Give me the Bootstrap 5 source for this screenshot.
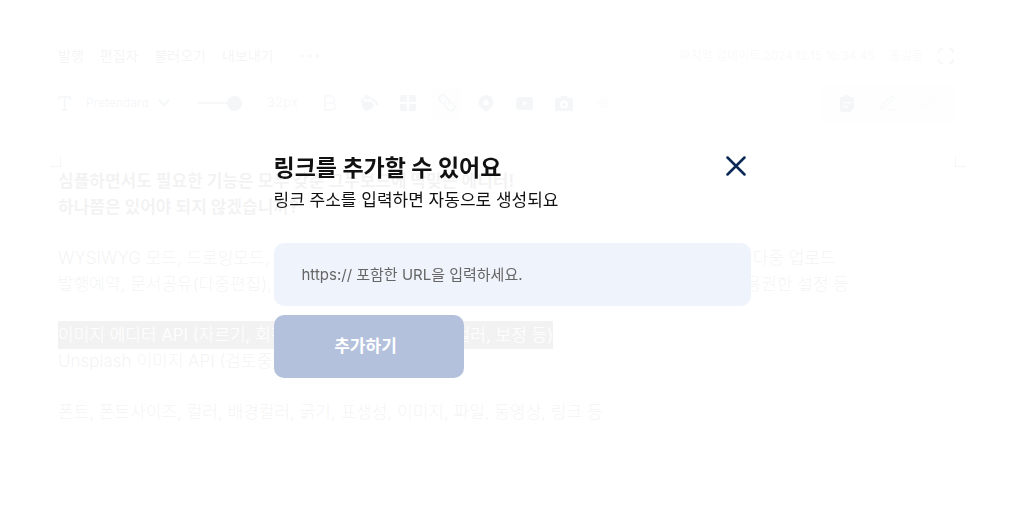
<!DOCTYPE html>
<html lang="ko">
<head>
<meta charset="utf-8">
<meta name="viewport" content="width=device-width, initial-scale=1">
<title>링크 추가</title>
<link href="https://cdn.jsdelivr.net/npm/bootstrap@5.3.0/dist/css/bootstrap.min.css" rel="stylesheet">
<style>
  :root { --navy: #0a2a55; --ink: #111; --soft: #5f6f8c; --tool: #35507a; }
  body { font-family: Inter, "Noto Sans CJK KR", sans-serif; color: var(--ink); background: #fff; }
  svg { display: block; }
  .editor { padding: 46px 70px 40px 58px; }
  .topbar { height: 20px; font-size: 14px; line-height: 20px; }
  .topbar nav { gap: 16px; }
  .topbar a { color: #333; text-decoration: none; }
  .more-btn, .tool-btn, .close-btn { border: 0; background: none; padding: 0; color: var(--navy); }
  .more-btn { margin-left: 11px; color: var(--soft); }
  .status { gap: 15px; font-size: 12px; color: #888; }
  .toolbar { margin-top: 17px; height: 40px; }
  .text-tools { gap: 15px; width: 139px; }
  .font-pick { width: 84px; border: 0; padding: 0; font-size: 12px; color: var(--tool); appearance: none;
    background: url("data:image/svg+xml,%3Csvg xmlns='http://www.w3.org/2000/svg' width='12' height='8'%3E%3Cpath d='M1 1l5 5 5-5' fill='none' stroke='%2335507a' stroke-width='2'/%3E%3C/svg%3E") no-repeat right center; }
  .size-tools { width: 117px; gap: 22px; font-size: 13px; color: #666; }
  .size-range { appearance: none; width: 48px; height: 16px; margin: 0; background: linear-gradient(90deg, #5f6f8c 75%, #ddd 75%) center / 100% 2px no-repeat; }
  .size-range::-webkit-slider-thumb { appearance: none; width: 15px; height: 15px; border-radius: 50%; background: #35507a; }
  .tool-btn { width: 31px; height: 31px; display: flex; align-items: center; justify-content: center; border-radius: 4px; color: var(--tool); }
  .tool-btn.line-icon { color: var(--soft); }
  .tool-btn.active { background: #e8e8ec; }
  .mode-group { background: #dfe1e6; border-radius: 6px; padding: 0 10px; gap: 10px; height: 40px; }
  .crop-marks { margin: 33px -12px 0 -8px; height: 12px; color: #555; }
  .doc { font-size: 17px; line-height: 26px; font-weight: 300; white-space: nowrap; }
  .doc p { margin-bottom: 25px; }
  .doc .lead-line { font-weight: 700; }
  .picked { background: #111; color: #fff; padding: 4px 0; }
  .veil { background: rgba(255,255,255,.95); z-index: 10; padding: 152px 16px 0; }
  .dialog-box { max-width: 477px; margin: 0 auto; }
  .dialog-box h1 { font-size: 23px; line-height: 32px; font-weight: 700; margin: 0; }
  .dialog-box .hint { font-size: 17px; line-height: 32px; margin: 0 0 27px; }
  .close-btn { margin: 4px 5px 0 0; height: 20px; }
  .url-field { height: 63px; border: 0; border-radius: 10px; background: #eff3fb; padding: 0 28px; font-size: 15px; margin-bottom: 9px; }
  .url-field::placeholder { color: #666; }
  .url-field:focus { background: #eff3fb; }
  .add-btn { width: 190px; height: 63px; border: 0; border-radius: 10px; background: #b4c1dd; color: #fff; font-size: 17px; font-weight: 700; padding: 0 18px 0 12px; }
  .add-btn:hover { background: #a2b3d6; color: #fff; }
</style>
</head>
<body>
<main class="editor overflow-hidden">
  <header class="topbar d-flex justify-content-between align-items-center">
    <nav class="d-flex align-items-center">
      <a href="#">발행</a><a href="#">편집자</a><a href="#">불러오기</a><a href="#">내보내기</a>
      <button class="more-btn" type="button" aria-label="더보기"><svg width="20" height="6"><g fill="currentColor"><circle cx="2.500" cy="3" r="2"/><circle cx="10" cy="3" r="2"/><circle cx="17.500" cy="3" r="2"/></g></svg></button>
    </nav>
    <div class="status d-flex align-items-center">
      <span>마지막 업데이트 2024.12.15 16:34:45</span><span>홍길동</span>
      <button class="more-btn ms-0" type="button" aria-label="전체화면"><svg width="16" height="16" fill="none" stroke="currentColor" stroke-width="2"><path d="M1 5V2.500L2.500 1H5M11 1h2.500L15 2.500V5M15 11v2.500L13.500 15H11M5 15H2.500L1 13.500V11"/></svg></button>
    </div>
  </header>

  <div class="toolbar d-flex align-items-center">
    <div class="text-tools d-flex align-items-center flex-shrink-0">
      <svg width="13" height="15" fill="none" stroke="#35507a" stroke-width="1.500"><path d="M1 4V1h11v3M6.500 1v13M4 14h5"/></svg>
      <select class="font-pick" aria-label="글꼴"><option>Pretendard</option></select>
    </div>
    <div class="size-tools d-flex align-items-center flex-shrink-0">
      <input class="size-range flex-shrink-0" id="size" type="range" min="0" max="100" value="92" aria-label="글자 크기">
      <output for="size">32px</output>
    </div>
    <div class="d-flex gap-2">
      <button class="tool-btn line-icon" type="button" aria-label="굵게"><svg width="14" height="16" fill="none" stroke="currentColor" stroke-width="1.500"><path d="M2 1h6a3.400 3.400 0 010 7H2zM2 8h7a3.400 3.400 0 010 7H2z"/></svg></button>
      <button class="tool-btn" type="button" aria-label="배경색"><svg width="18" height="16" fill="currentColor"><path d="M1 6l11 1 2 3-2 4-6 2-3-3z"/><path d="M1 6l6-5 8 5" fill="none" stroke="currentColor" stroke-width="1.500"/><path d="M6 0l2 5M14 6q3 0 3 4" fill="none" stroke="currentColor" stroke-width="2"/></svg></button>
      <button class="tool-btn" type="button" aria-label="표"><svg width="16" height="16" fill="currentColor"><path d="M0 1a1 1 0 011-1h6v7H0zM9 0h6a1 1 0 011 1v6H9zM0 9h7v7H1a1 1 0 01-1-1zM9 9h7v6a1 1 0 01-1 1H9z"/></svg></button>
      <button class="tool-btn line-icon active" type="button" aria-label="링크"><svg width="18" height="18" viewBox="0 0 18 18" fill="none" stroke="currentColor" stroke-width="1.800"><g transform="rotate(45 9 9)"><path d="M7 12.500H3a3.500 3.500 0 010-7h4.500a3.500 3.500 0 013.500 3.500M11 5.500h4a3.500 3.500 0 010 7h-4.500a3.500 3.500 0 01-3.500-3.500"/></g></svg></button>
      <button class="tool-btn" type="button" aria-label="지도"><svg width="16" height="17" fill="currentColor"><path fill-rule="evenodd" d="M8 0a7.500 7.500 0 017.500 7.500C15.500 12 11 14 8 17 5 14 .5 12 .5 7.500A7.500 7.500 0 018 0zm0 5a2.700 2.700 0 100 5.400A2.700 2.700 0 008 5z"/></svg></button>
      <button class="tool-btn" type="button" aria-label="동영상"><svg width="17" height="13" fill="currentColor"><path fill-rule="evenodd" d="M3 0h11a3 3 0 013 3v7a3 3 0 01-3 3H3a3 3 0 01-3-3V3a3 3 0 013-3zm4 4v5l4-2.500z"/></svg></button>
      <button class="tool-btn" type="button" aria-label="사진"><svg width="18" height="15" fill="currentColor"><path fill-rule="evenodd" d="M5 2l1-2h6l1 2h3a2 2 0 012 2v11H0V4a2 2 0 012-2zm4 2.500a4 4 0 100 8 4 4 0 000-8zM9 7a1.700 1.700 0 110 3.400A1.700 1.700 0 019 7z"/></svg></button>
      <button class="tool-btn opacity-25" type="button" aria-label="효과"><svg width="14" height="14" fill="none" stroke="currentColor" stroke-width="3"><path d="M1 3l10 9M6 0v12M0 8l12-4M9 2l3 6"/></svg></button>
    </div>
    <div class="mode-group d-flex align-items-center ms-auto">
      <button class="tool-btn" type="button" aria-label="붙여넣기"><svg width="14" height="17" fill="currentColor"><path fill-rule="evenodd" d="M2 2h2l1-2h4l1 2h2a2 2 0 012 2v9l-4 4H2a2 2 0 01-2-2V4a2 2 0 012-2zm1 5v1.300h8V7zm0 4v1.300h5V11z"/></svg></button>
      <button class="tool-btn opacity-50" type="button" aria-label="수정"><svg width="16" height="16" fill="none" stroke="currentColor" stroke-width="1.500"><path d="M1 14l1-4L12 1l2 2-9 9zM8 15h7"/></svg></button>
      <button class="tool-btn opacity-25" type="button" aria-label="코드"><svg width="20" height="14" fill="none" stroke="currentColor" stroke-width="1.500"><path d="M6 2L1 7l5 5M14 2l5 5-5 5M12 1L8 13"/></svg></button>
    </div>
  </div>

  <div class="crop-marks d-flex justify-content-between">
    <svg width="11" height="11" fill="none" stroke="currentColor"><path d="M0 10.500h10.500V0"/></svg>
    <svg width="11" height="11" fill="none" stroke="currentColor"><path d="M.5 0v10.500H11"/></svg>
  </div>

  <article class="doc">
    <p class="lead-line">심플하면서도 필요한 기능은 모두 갖춘 그누보드에 딱맞는 에디터!<br>하나쯤은 있어야 되지 않겠습니까?</p>
    <p>WYSIWYG 모드, 드로잉모드, 코드모드, 테이블 편집, 이미지 편집, 파일 첨부, 동영상 첨부, 이미지 다중 업로드<br>발행예약, 문서공유(다중편집), 자동저장, 비밀번호, 히스토리, 불러오기, 내보내기, 편집자 초대, 사용권한 설정 등</p>
    <p><span class="picked">이미지 에디터 API (자르기, 회전, 반전, 필터 효과, 크기, 컬러, 보정 등)</span><br>Unsplash 이미지 API (검토중)</p>
    <p>폰트, 폰트사이즈, 컬러, 배경컬러, 굵기, 표생성, 이미지, 파일, 동영상, 링크 등</p>
  </article>
</main>

<div class="veil position-fixed top-0 start-0 w-100 h-100" role="dialog" aria-modal="true" aria-labelledby="dlg-title">
  <form class="dialog-box">
    <div class="d-flex justify-content-between align-items-start">
      <h1 id="dlg-title">링크를 추가할 수 있어요</h1>
      <button class="close-btn" type="button" aria-label="닫기"><svg width="20" height="20" fill="none" stroke="currentColor" stroke-width="2.500" stroke-linecap="round"><path d="M1.500 1.500l17 17M18.500 1.500l-17 17"/></svg></button>
    </div>
    <p class="hint"><label for="url">링크 주소를 입력하면 자동으로 생성되요</label></p>
    <input class="url-field form-control" id="url" type="url" placeholder="https:// 포함한 URL을 입력하세요.">
    <button class="add-btn btn" type="submit">추가하기</button>
  </form>
</div>
<script src="https://cdn.jsdelivr.net/npm/bootstrap@5.3.0/dist/js/bootstrap.bundle.min.js"></script>
</body>
</html>
